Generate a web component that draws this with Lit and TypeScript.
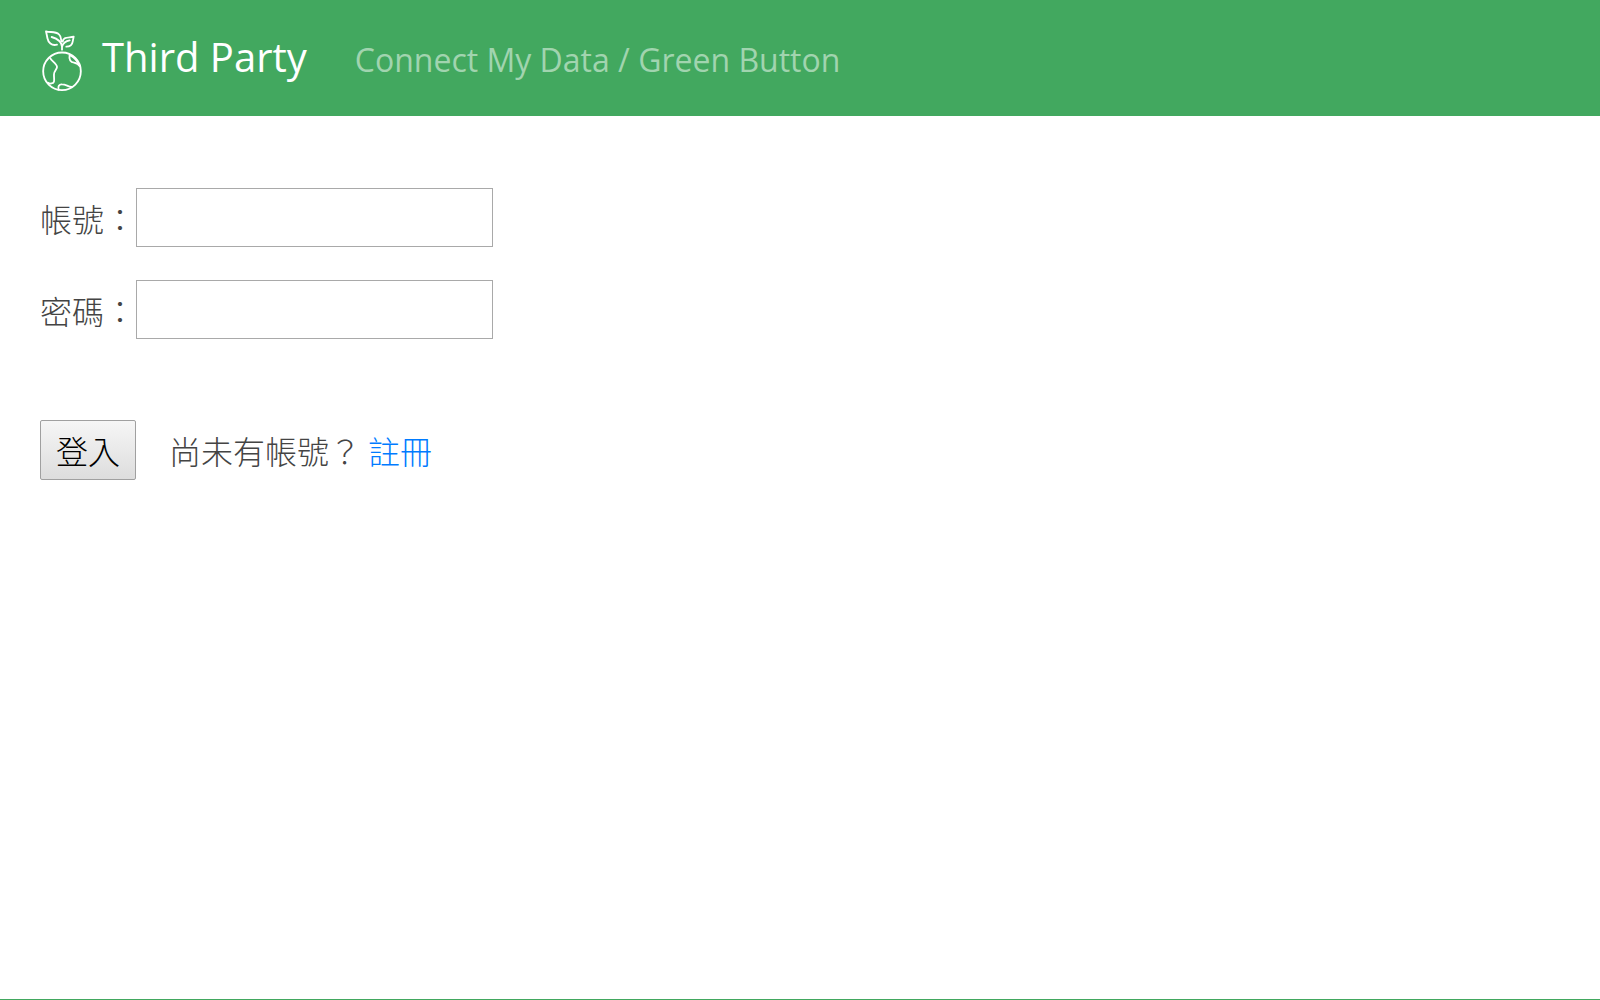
import { LitElement, html, css } from "lit";
import { customElement } from "lit/decorators.js";

@customElement("app-root")
export class AppRoot extends LitElement {
  static styles = css`
    :host {
      display: flex;
      flex-direction: column;
      min-height: 100vh;
      box-sizing: border-box;
      border-bottom: 1px solid #42a85f;
      background: #fff;
      color: #444;
      font-family: "Open Sans", "Noto Sans CJK TC", sans-serif;
    }
    .header {
      display: flex;
      align-items: center;
      min-height: 116px;
      padding: 0 42px;
      background: #42a85f;
    }
    .logo {
      flex: none;
      width: 40px;
      height: 62px;
      margin: 6px 20px 0 0;
    }
    .titles {
      display: flex;
      flex-wrap: wrap;
      align-items: baseline;
      column-gap: 48px;
    }
    .title {
      margin: 0;
      color: #fff;
      font-size: 40px;
      font-weight: 400;
      line-height: 60px;
    }
    .subtitle {
      margin: 0;
      color: #a1d4af;
      font-size: 32px;
      line-height: 60px;
    }
    .form {
      display: flex;
      flex-direction: column;
      gap: 33px;
      padding: 72px 40px;
      font-family: "Noto Sans CJK TC", sans-serif;
      font-size: 32px;
      font-weight: 300;
      line-height: 46px;
    }
    .field,
    .actions {
      display: flex;
      align-items: center;
    }
    .label {
      flex: none;
      width: 96px;
    }
    .input {
      box-sizing: border-box;
      width: 357px;
      height: 59px;
      padding: 0 12px;
      border: 1px solid #a9a9a9;
      border-radius: 0;
      background: #fff;
      color: #444;
      font: inherit;
    }
    .actions {
      margin-top: 48px;
      gap: 33px;
    }
    .submit {
      box-sizing: border-box;
      width: 96px;
      height: 60px;
      padding: 0;
      border: 1px solid #a0a0a0;
      border-radius: 2px;
      background: linear-gradient(#f6f6f6, #dddddd);
      color: #000;
      font: inherit;
    }
    .hint {
      margin: 0;
    }
    .link {
      color: #007bff;
      text-decoration: none;
    }
  `;

  render() {
    return html`
      <header class="header">
        <svg class="logo" viewBox="36 30 120 186" fill="none" stroke="#fff" stroke-width="5.5"
          stroke-linecap="round" stroke-linejoin="round" aria-hidden="true">
          <circle cx="96" cy="154" r="56.5" />
          <path d="M61 115 C65 123 81 131 81 141 C81 148 72 153 72 163 C71 175 77 190 64 190 C60 192 57 190 54 188" />
          <path d="M119 105 C116 119 122 127 132 128 C141 130 146 133 149 138" />
          <path d="M119 105 C130 111 142 121 149 138" />
          <path d="M86 209 C83 200 87 192 96 193 C108 193 112 199 125 201" />
          <path d="M96 89 V80 C95 67 85 57 65 51 M96 80 C99 70 107 63 119 61" />
          <path d="M81 74 C64 78 55 68 52 54 C51 46 49 40 48 34 C60 38 76 33 87 43 C94 49 93 57 94 64" />
          <path d="M109 80 C123 80 127 73 128 65 C129 60 130 55 131 50 C118 54 100 49 98 65" />
        </svg>
        <div class="titles">
          <h1 class="title">Third Party</h1>
          <p class="subtitle">Connect My Data / Green Button</p>
        </div>
      </header>
      <form class="form" lang="zh-Hant" @submit=${(e: Event) => e.preventDefault()}>
        <div class="field">
          <label class="label" for="account">帳號：</label>
          <input class="input" id="account" name="account" type="text" autocomplete="username" />
        </div>
        <div class="field">
          <label class="label" for="password">密碼：</label>
          <input class="input" id="password" name="password" type="password" autocomplete="current-password" />
        </div>
        <div class="actions">
          <button class="submit" type="submit">登入</button>
          <p class="hint">尚未有帳號？ <a class="link" href="#register">註冊</a></p>
        </div>
      </form>
    `;
  }
}
